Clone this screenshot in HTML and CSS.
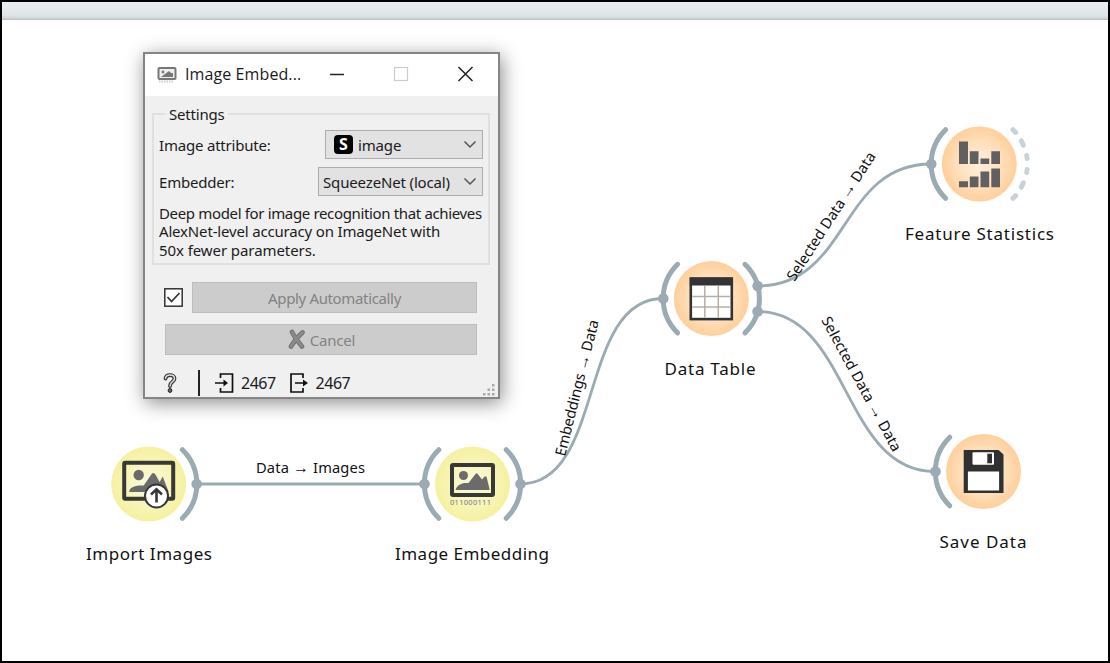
FILE: index.html
```html
<!DOCTYPE html>
<html lang="en">
<head>
<meta charset="utf-8">
<title>Image Embedding workflow</title>
<link rel="stylesheet" href="styles.css">
</head>
<body>
<div class="app">
  <div class="toolbar-edge"></div>
  <main class="canvas">
    <svg class="workflow" viewBox="2 20 1106 641" width="1106" height="641">
      <defs>
        <radialGradient id="yellow"><stop offset="0" stop-color="#fbfadf"/><stop offset=".5" stop-color="#f8f6c0"/><stop offset="1" stop-color="#f5f19e"/></radialGradient>
        <radialGradient id="orange"><stop offset="0" stop-color="#ffeedb"/><stop offset=".5" stop-color="#ffe3c2"/><stop offset="1" stop-color="#ffcf9b"/></radialGradient>
        <path id="arc-left" d="M-33.7-34.3A48 48 0 0 0-33.7 34.3"/>
        <path id="arc-right" d="M33.7-34.3A48 48 0 0 1 33.7 34.3"/>
      </defs>

      <g class="link">
        <path d="M196.500 484H424"/>
        <path d="M520.500 484C605 484 578 298.500 663 298.500"/>
        <path d="M757.500 286C850 286 839 164 931 164"/>
        <path d="M757.500 311.500C850 311.500 842 471.500 935 471.500"/>
      </g>

      <g transform="translate(148.700 484)">
        <circle r="37.500" fill="url(#yellow)"/>
        <use href="#arc-right" class="arc"/><circle class="anchor" cx="48" r="5.300"/>
        <rect x="-24.500" y="-21.200" width="49" height="36" rx="1" fill="none" stroke="#383838" stroke-width="4"/>
        <g fill="#6b6b6b"><circle cx="-10" cy="-9" r="5.200"/><path d="M-19.500 7.500C-19 3-13 1.200-5 1.500L3-10Q5-12.500 7-9L11-2 14-7.500 20 8H-19.500Z"/></g>
        <circle cx="7.800" cy="12" r="11.500" fill="#fff" stroke="#383838" stroke-width="2"/>
        <path d="M7.800 18.500V6M2.300 10.500 7.800 5.300 13.300 10.500" fill="none" stroke="#383838" stroke-width="2.600"/>
      </g>

      <g transform="translate(472.500 484)">
        <circle r="37.500" fill="url(#yellow)"/>
        <use href="#arc-left" class="arc"/><use href="#arc-right" class="arc"/>
        <circle class="anchor" cx="-48" r="5.300"/><circle class="anchor" cx="48" r="5.300"/>
        <rect x="-20.500" y="-19" width="41" height="30" rx="1" fill="none" stroke="#383838" stroke-width="4"/>
        <g fill="#6b6b6b"><circle cx="-9" cy="-8.500" r="4.500"/><path d="M-17 6C-15-1-8-1-4-1L3-10Q4.500-12 6-9L9.500-4.500 12-7.500H14L17 5V6Z"/></g>
        <text class="bits" x="-22.500" y="20.500" textLength="41">011000111</text>
      </g>

      <g transform="translate(711.300 298.600)">
        <circle r="37.500" fill="url(#orange)"/>
        <use href="#arc-left" class="arc"/><use href="#arc-right" class="arc"/>
        <circle class="anchor" cx="-48" r="5.300"/><circle class="anchor" cx="46.300" cy="-12.700" r="5.300"/><circle class="anchor" cx="46.300" cy="12.900" r="5.300"/>
        <rect x="-20.500" y="-20" width="41" height="40.500" fill="#fff" stroke="#333" stroke-width="2.600"/>
        <path d="M-21.500-21h43v8h-43z" fill="#333"/>
        <path d="M-6.500-12.500V19M7-12.500V19M-19-2H19M-19 8.500H19" stroke="#b9aea6" stroke-width="1.500"/>
      </g>

      <g transform="translate(979.300 164)">
        <circle r="37.500" fill="url(#orange)"/>
        <use href="#arc-left" class="arc"/><circle class="anchor" cx="-48" r="5.300"/>
        <g class="arc free"><path d="m33.700-34.300 2.700 2.700M42-23.300 44-18.800M47.400-8.500 47.800-5.500M47.800 5.500 47.400 8.500M44 18.800 42 23.300M36.400 31.600 33.700 34.300"/></g>
        <path fill="#606060" d="M-20.300-22.500h9V0h-9zM-9.500-12.800h8.700V0h-8.700zM1.200-5.500h8.700V0h-8.700zM12-12.800h8.700V0H12zM-20.300 17.300h9v6h-9zM-9.500 12.500h8.700v10.800h-8.700zM1.200 7.600h8.700v15.700h-8.700zM12 4.400h8.700v18.900H12z"/>
      </g>

      <g transform="translate(983.500 471.500)">
        <circle r="37.500" fill="url(#orange)"/>
        <use href="#arc-left" class="arc"/><circle class="anchor" cx="-48" r="5.300"/>
        <path d="M-19.800-21.500H15L20-17V21.500H-19.800Z" fill="#303030"/>
        <rect x="-11" y="-19.300" width="21.500" height="12.500" rx="1" fill="#fff"/><rect x="3.800" y="-17.800" width="4.700" height="9.600" fill="#303030"/>
        <rect x="-15.600" y="0" width="31.200" height="19" fill="#fff"/>
      </g>

      <g class="node-label">
        <text x="86" y="560" textLength="126">Import Images</text>
        <text x="395" y="560" textLength="154">Image Embedding</text>
        <text x="664.500" y="375" textLength="91">Data Table</text>
        <text x="905" y="240" textLength="149">Feature Statistics</text>
        <text x="939.500" y="547.500" textLength="87">Save Data</text>
      </g>
      <g class="link-label">
        <text x="256" y="472.500" textLength="109">Data <tspan class="arrow">→</tspan> Images</text>
        <text transform="translate(565 457) rotate(-76)" textLength="140">Embeddings <tspan class="arrow">→</tspan> Data</text>
        <text transform="translate(794.500 282) rotate(-57)" textLength="150">Selected Data <tspan class="arrow">→</tspan> Data</text>
        <text transform="translate(821 320) rotate(61.500)" textLength="151">Selected Data <tspan class="arrow">→</tspan> Data</text>
      </g>
    </svg>

    <section class="dialog">
      <header class="titlebar">
        <svg class="app-icon" width="20" height="18" viewBox="0 0 20 18"><rect x="1.500" y="2" width="17" height="11" rx="1" fill="#eee" stroke="#777" stroke-width="2"/><path d="M4 11 8 8 12 5 14 7 16 7V11Z" fill="#777"/><circle cx="6" cy="6" r="1.400" fill="#777"/><path d="M2 15.500H17" stroke="#ccc" stroke-width="2" stroke-dasharray="1.500 1"/></svg>
        <h1 class="title">Image Embed...</h1>
        <svg class="window-buttons" width="150" height="20" viewBox="0 0 150 20"><path d="M3 10.500H17" stroke="#222" stroke-width="1.500"/><rect x="67.500" y="3.500" width="13" height="13" fill="none" stroke="#ccc" stroke-width="1.200"/><path d="M131.500 3 145.500 17M145.500 3 131.500 17" stroke="#222" stroke-width="1.500"/></svg>
      </header>
      <div class="dialog-body">
        <fieldset class="settings">
          <legend>Settings</legend>
          <div class="field"><label>Image attribute:</label><div class="combo attribute"><span class="type-badge">S</span><span class="value">image</span><svg width="14" height="9" viewBox="0 0 14 9"><path d="M1.500 1.500 7 7 12.500 1.500" fill="none" stroke="#555" stroke-width="1.500"/></svg></div></div>
          <div class="field"><label>Embedder:</label><div class="combo embedder"><span class="value">SqueezeNet (local)</span><svg width="14" height="9" viewBox="0 0 14 9"><path d="M1.500 1.500 7 7 12.500 1.500" fill="none" stroke="#555" stroke-width="1.500"/></svg></div></div>
          <p class="description"><span class="first-line">Deep model for image recognition that achieves</span><br>AlexNet-level accuracy on ImageNet with<br><span class="last-line">50x fewer parameters.</span></p>
        </fieldset>
        <div class="apply-row">
          <svg width="19" height="19" viewBox="0 0 19 19"><rect x=".8" y=".8" width="17.400" height="17.400" fill="#fff" stroke="#333" stroke-width="1.500"/><path d="M3.500 9 7.500 13.500 15.500 5" fill="none" stroke="#333" stroke-width="1.700"/></svg>
          <button class="button apply" disabled>Apply Automatically</button>
        </div>
        <button class="button cancel" disabled><svg width="19" height="21" viewBox="0 0 19 21"><path d="M5 3Q8 9 15 17.500M15.500 3.500Q9 9 4 17.500" fill="none" stroke="#707070" stroke-width="4.600" stroke-linecap="round"/><path d="M5 3Q8 9 15 17.500M15.500 3.500Q9 9 4 17.500" fill="none" stroke="#8c8c8c" stroke-width="2.600" stroke-linecap="round"/></svg><span>Cancel</span></button>
        <footer class="status">
          <svg class="help" width="14" height="20" viewBox="0 0 14 20"><g fill="none" stroke-linecap="round"><path d="M2.500 5.500C3 .8 11.500 1 11.500 5.500 11.500 9 7 8.500 7 13" stroke="#333" stroke-width="3.800"/><path d="M2.500 5.500C3 .8 11.500 1 11.500 5.500 11.500 9 7 8.500 7 13" stroke="#ddd" stroke-width="1.500"/></g><circle cx="7" cy="17.500" r="1.900" fill="#666" stroke="#222"/></svg>
          <span class="divider"></span>
          <svg class="input" width="19" height="20" viewBox="0 0 19 20" fill="none" stroke="#111" stroke-width="1.700"><path d="M5.500 5V1H17.500V19H5.500V15M0 10H10"/><path d="M8.500 6.500 13 10 8.500 13.500Z" fill="#111" stroke="none"/></svg>
          <span class="count">2467</span>
          <svg class="output" width="19" height="20" viewBox="0 0 19 20" fill="none" stroke="#111" stroke-width="1.700"><path d="M13 5V1H1V19H13V15M5 10H15"/><path d="M13 6.500 18 10 13 13.500Z" fill="#111" stroke="none"/></svg>
          <span class="count">2467</span>
          <svg class="grip" width="12" height="12" viewBox="0 0 12 12" fill="#aaa"><path d="M9 0h2.500v2.500H9zM4.500 4.500H7V7H4.500zM9 4.500h2.500V7H9zM0 9h2.500v2.500H0zM4.500 9H7v2.500H4.500zM9 9h2.500v2.500H9z"/></svg>
        </footer>
      </div>
    </section>
  </main>
</div>
</body>
</html>
```
FILE: styles.css
```css
* { box-sizing: border-box; }
body { margin: 0; font-family: "Noto Sans", sans-serif; color: #1b1b1b; }
.app { width: 1110px; height: 663px; border: 2px solid #000; background: #fff; overflow: hidden; }
.toolbar-edge { height: 18px; background: linear-gradient(#e8eef2, #dfe4e7 75%, #d2d8da 88%, #b9c0c2); }
.canvas { position: relative; height: 641px; }
.workflow { display: block; }
.link path { fill: none; stroke: #9aabb3; stroke-width: 2.8; }
.arc { fill: none; stroke: #9aabb3; stroke-width: 5; stroke-linecap: round; }
.free { stroke: #c9d2d6; }
.anchor { fill: #9aabb3; }
.bits { font-size: 7.5px; fill: #777; }
.node-label text { font-size: 17px; fill: #111; }
.link-label text { font-size: 14.7px; fill: #111; }
.link-label .arrow { font-family: "Liberation Sans", sans-serif; font-size: 16px; }

.dialog { position: absolute; left: 141px; top: 32px; width: 357px; height: 347px; border: 2px solid #858585; background: #f0f0f0; box-shadow: 2px 4px 18px rgba(0, 0, 0, .45); font-size: 15px; }
.titlebar { display: flex; align-items: center; height: 42px; padding: 0 12px; background: #fff; }
.app-icon { margin-top: -1px; }
.title { flex: 1; margin: -2px 0 0 8px; font: 400 16px "Open Sans", sans-serif; letter-spacing: .1px; white-space: nowrap; }
.window-buttons { flex: none; margin: -2px 9px 0 0; }
.dialog-body { padding: 8px 7px 0; }
.settings { display: flex; flex-direction: column; gap: 8px; margin: 0; padding: 6px 5px 0 5px; width: 338px; height: 161px; border: 2px solid #e0e0e0; min-width: 0; }
.settings legend { margin-left: 6px; padding: 0 4px; line-height: 20px; letter-spacing: -.2px; }
.field { display: flex; align-items: center; justify-content: space-between; height: 29px; }
.field label { letter-spacing: -.2px; }
.combo { display: flex; align-items: center; height: 29px; border: 1px solid #adadad; background: #e2e2e2; padding: 0 5px 0 4px; }
.attribute { width: 158px; padding-left: 8px; }
.embedder { width: 165px; }
.combo .value { flex: 1; letter-spacing: -.15px; white-space: nowrap; }
.type-badge { width: 19px; height: 19px; margin-right: 5px; border-radius: 4px; background: #000; color: #fff; font-size: 16px; font-weight: 700; line-height: 19px; text-align: center; }
.description { margin: 0; line-height: 18.4px; letter-spacing: -.17px; white-space: nowrap; }
.first-line { letter-spacing: -.35px; }
.last-line { letter-spacing: -.08px; }
.apply-row { display: flex; align-items: center; justify-content: space-between; margin: 17px 14px 11px 12px; }
.button { display: flex; align-items: center; justify-content: center; gap: 4px; height: 31px; padding: 0; border: 1px solid #bdbdbd; background: #ccc; color: #838383; font: 15px "Noto Sans", sans-serif; letter-spacing: -.2px; }
.apply { width: 285px; letter-spacing: -.35px; }
.cancel { width: 312px; margin-left: 13px; }
.status { display: flex; align-items: center; height: 26px; margin: 15px 0 0 11px; font-size: 16px; }
.divider { width: 2px; height: 26px; margin: 0 15px 0 21px; background: #222; }
.count { margin: 0 14px 0 7px; letter-spacing: -.5px; }
.grip { flex: none; align-self: flex-end; margin-left: auto; margin-right: -4px; }
```
